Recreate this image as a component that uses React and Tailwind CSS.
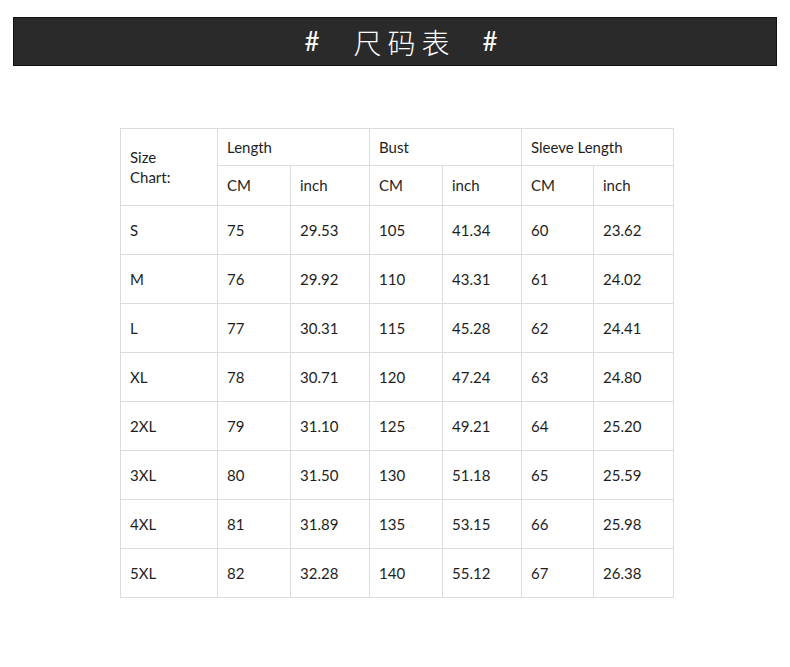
import React from 'react';

const rows = [
  ['S', '75', '29.53', '105', '41.34', '60', '23.62'],
  ['M', '76', '29.92', '110', '43.31', '61', '24.02'],
  ['L', '77', '30.31', '115', '45.28', '62', '24.41'],
  ['XL', '78', '30.71', '120', '47.24', '63', '24.80'],
  ['2XL', '79', '31.10', '125', '49.21', '64', '25.20'],
  ['3XL', '80', '31.50', '130', '51.18', '65', '25.59'],
  ['4XL', '81', '31.89', '135', '53.15', '66', '25.98'],
  ['5XL', '82', '32.28', '140', '55.12', '67', '26.38'],
];

const cell = 'border border-[#dcdcdc] pl-[9px] text-left font-normal align-middle';

export default function App() {
  return (
    <div className="w-[790px] h-[667px] bg-white pt-[17px] text-[#1e1e1e]" style={{ fontFamily: 'Lato, "Noto Sans", "Noto Sans CJK SC", sans-serif' }}>
      <div className="mx-[13px] h-[49px] bg-[#2a2a2a] border border-[#111] flex items-center justify-center text-white text-[26px] pl-[12px]">
        <span>#</span>
        <span className="ml-[34px] flex gap-[6px] text-[28px]" style={{ fontFamily: '"Noto Sans CJK SC", sans-serif', fontWeight: 300 }}>
          <span>尺</span>
          <span>码</span>
          <span>表</span>
        </span>
        <span className="ml-[33px]">#</span>
      </div>

      <table className="mt-[62px] ml-[120px] w-[553px] table-fixed border-collapse text-[15px]">
        <colgroup>
          <col className="w-[97px]" />
          <col className="w-[73px]" />
          <col className="w-[79px]" />
          <col className="w-[73px]" />
          <col className="w-[79px]" />
          <col className="w-[72px]" />
          <col className="w-[80px]" />
        </colgroup>
        <thead>
          <tr className="h-[37px]">
            <th rowSpan={2} className={`${cell} leading-[20px]`}>Size<br />Chart:</th>
            <th colSpan={2} className={cell}>Length</th>
            <th colSpan={2} className={cell}>Bust</th>
            <th colSpan={2} className={cell}>Sleeve Length</th>
          </tr>
          <tr className="h-[40px]">
            <th className={cell}>CM</th>
            <th className={cell}>inch</th>
            <th className={cell}>CM</th>
            <th className={cell}>inch</th>
            <th className={cell}>CM</th>
            <th className={cell}>inch</th>
          </tr>
        </thead>
        <tbody>
          {rows.map((r) => (
            <tr key={r[0]} className="h-[49px]">
              {r.map((v, i) => (
                <td key={i} className={cell}>{v}</td>
              ))}
            </tr>
          ))}
        </tbody>
      </table>
    </div>
  );
}
